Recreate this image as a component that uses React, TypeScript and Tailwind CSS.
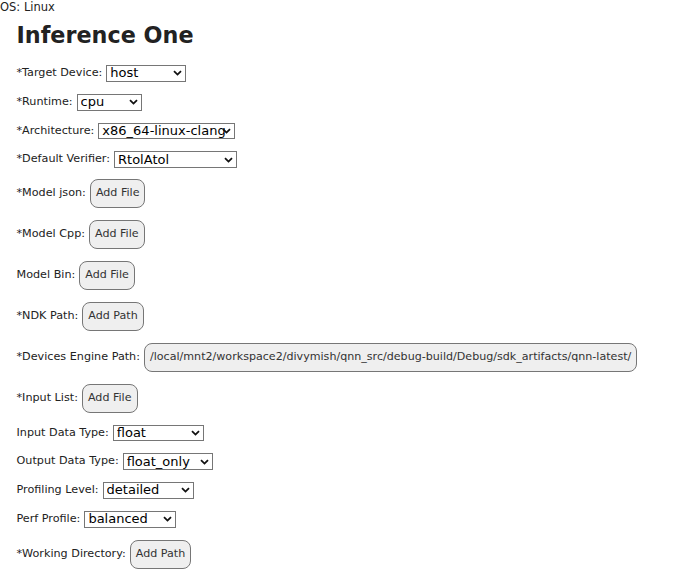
import React from 'react';

const font = { fontFamily: '"DejaVu Sans", Verdana, sans-serif' };

type Row =
  | { kind: 'select'; label: string; value: string; options: string[]; width: string }
  | { kind: 'button'; label: string; text: string };

const rows: Row[] = [
  { kind: 'select', label: '*Target Device:', value: 'host', options: ['host', 'android'], width: 'w-[80px]' },
  { kind: 'select', label: '*Runtime:', value: 'cpu', options: ['cpu', 'gpu', 'htp'], width: 'w-[65px]' },
  { kind: 'select', label: '*Architecture:', value: 'x86_64-linux-clang', options: ['x86_64-linux-clang', 'aarch64-android'], width: 'w-[137px]' },
  { kind: 'select', label: '*Default Verifier:', value: 'RtolAtol', options: ['RtolAtol', 'AdjustedRtolAtol', 'CosineSimilarity'], width: 'w-[123px]' },
  { kind: 'button', label: '*Model json:', text: 'Add File' },
  { kind: 'button', label: '*Model Cpp:', text: 'Add File' },
  { kind: 'button', label: 'Model Bin:', text: 'Add File' },
  { kind: 'button', label: '*NDK Path:', text: 'Add Path' },
  {
    kind: 'button',
    label: '*Devices Engine Path:',
    text: '/local/mnt2/workspace2/divymish/qnn_src/debug-build/Debug/sdk_artifacts/qnn-latest/',
  },
  { kind: 'button', label: '*Input List:', text: 'Add File' },
  { kind: 'select', label: 'Input Data Type:', value: 'float', options: ['float', 'native'], width: 'w-[91px]' },
  { kind: 'select', label: 'Output Data Type:', value: 'float_only', options: ['float_only', 'native_only', 'float_and_native'], width: 'w-[90px]' },
  { kind: 'select', label: 'Profiling Level:', value: 'detailed', options: ['basic', 'detailed'], width: 'w-[91px]' },
  { kind: 'select', label: 'Perf Profile:', value: 'balanced', options: ['balanced', 'high_performance', 'power_saver'], width: 'w-[92px]' },
  { kind: 'button', label: '*Working Directory:', text: 'Add Path' },
];

function Chevron() {
  return (
    <svg
      width="9"
      height="6"
      viewBox="0 0 9 6"
      className="pointer-events-none absolute right-[4px] top-1/2 -translate-y-1/2"
    >
      <path d="M1 1.2 L4.5 4.6 L8 1.2" fill="none" stroke="#111" strokeWidth="1.8" />
    </svg>
  );
}

export default function App() {
  return (
    <div className="min-h-[588px] bg-white text-[#222]" style={font}>
      <div className="text-[11.5px] leading-[14px]">OS: Linux</div>
      <div className="pl-[16.5px]">
        <h1 className="mt-[8px] text-[22.3px] font-bold leading-[26px] text-[#222]">Inference One</h1>
        <div className="mt-[17px] flex flex-col gap-3">
          {rows.map((row, i) => (
            <div
              key={row.label}
              className={`flex items-center gap-[4px] text-[11.2px] ${i === 4 ? '-mt-[1.7px]' : ''}`}
            >
              <span>{row.label}</span>
              {row.kind === 'select' ? (
                <div className={`relative ${row.width} h-[16.7px]`}>
                  <select
                    defaultValue={row.value}
                    className="block h-full w-full appearance-none border border-[#767676] bg-white pl-[3px] text-[13px] leading-[14px] text-black"
                  >
                    {row.options.map((o) => (
                      <option key={o}>{o}</option>
                    ))}
                  </select>
                  <Chevron />
                </div>
              ) : (
                <button className="h-[29px] rounded-lg border border-[#767676] bg-[#efefef] px-[5px] text-[11.1px] text-[#333]">
                  {row.text}
                </button>
              )}
            </div>
          ))}
        </div>
      </div>
    </div>
  );
}
